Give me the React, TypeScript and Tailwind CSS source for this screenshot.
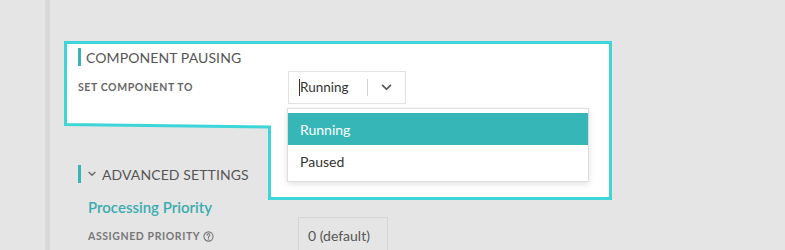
import React from "react";

const font = { fontFamily: "Lato, 'Noto Sans', sans-serif" };

function Chevron({ className }: { className?: string }) {
  return (
    <svg viewBox="0 0 12 8" className={className} fill="none" stroke="currentColor" strokeWidth="2" strokeLinecap="round" strokeLinejoin="round">
      <path d="M1.5 1.5 L6 6 L10.5 1.5" />
    </svg>
  );
}

export default function App() {
  return (
    <div className="relative w-[785px] h-[250px] overflow-hidden bg-[#e5e5e5] flex" style={font}>
      <div className="w-[45px] shrink-0" />
      <div className="w-[5px] shrink-0 bg-[#d9d9d9]" />
      {/* highlight annotation */}
      <svg className="absolute left-0 top-0 pointer-events-none" width="785" height="250">
        <polygon
          points="65.5,42.5 610.5,42.5 610.5,198.5 269.5,198.5 269.5,127 65.5,124.5"
          fill="#ffffff"
          stroke="#3ed5d8"
          strokeWidth="3"
        />
      </svg>
      <div className="relative flex-1 pl-[28px] pt-[48px] flex flex-col">
        <div className="flex items-center h-[18px]">
          <div className="w-[3px] h-[18px] bg-[#39b3b3]" />
          <span className="ml-[5px] text-[14px] text-[#555555] tracking-[0.1px]">COMPONENT PAUSING</span>
        </div>
        <div className="flex items-center mt-[5px] h-[33px]">
          <span className="w-[210px] text-[10.5px] font-bold text-[#666666] tracking-[0.6px]">SET COMPONENT TO</span>
          <div className="relative">
            <div className="w-[118px] h-[33px] border border-[#e2e2e2] bg-white flex items-center">
              <div className="flex-1 flex items-center pl-[10px] text-[13.5px] text-[#333333]">
                <span className="w-px h-[17px] bg-[#333333]" />
                <span>Running</span>
              </div>
              <div className="w-px h-[17px] bg-[#d0d0d0]" />
              <div className="w-[37px] flex items-center justify-center text-[#555555]">
                <Chevron className="w-[11px] h-[7px]" />
              </div>
            </div>
            <div className="absolute left-[-1px] top-[37px] w-[302px] h-[74px] bg-white border border-[#dedede] shadow-[0_2px_6px_rgba(0,0,0,0.12)] z-10 pt-[4px]">
              <div className="h-[32px] bg-[#37b6b8] text-white text-[14px] flex items-center pl-[12px]">Running</div>
              <div className="h-[32px] text-[#333333] text-[14px] flex items-center pl-[12px]">Paused</div>
            </div>
          </div>
        </div>
        <div className="flex items-center h-[18px] mt-[61px]">
          <div className="w-[3px] h-[18px] bg-[#39b3b3]" />
          <Chevron className="ml-[7px] w-[8px] h-[6px] text-[#666666]" />
          <span className="ml-[6px] text-[14px] text-[#555555] tracking-[0.1px]">ADVANCED SETTINGS</span>
        </div>
        <div className="pl-[10px] mt-[14px] h-[20px] leading-[20px] text-[15px] font-semibold text-[#3aacb0]">Processing Priority</div>
        <div className="pl-[10px] flex items-start">
          <div className="w-[210px] flex items-center pt-[12px]">
            <span className="text-[10.5px] font-bold text-[#777777] tracking-[0.6px]">ASSIGNED PRIORITY</span>
            <svg viewBox="0 0 12 12" className="ml-[3px] w-[11px] h-[11px] text-[#777777]" fill="none" stroke="currentColor" strokeWidth="1.2">
              <circle cx="6" cy="6" r="5" />
              <path d="M4.5 4.6 a1.5 1.5 0 1 1 2 1.4 c-0.4 0.2 -0.5 0.5 -0.5 1" strokeLinecap="round" />
              <circle cx="6" cy="8.7" r="0.3" fill="currentColor" />
            </svg>
          </div>
          <div className="w-[90px] h-[40px] border border-[#d6d6d6] flex items-start pt-[7px] pl-[9px] text-[14px] text-[#555555]">0 (default)</div>
        </div>
      </div>
    </div>
  );
}
